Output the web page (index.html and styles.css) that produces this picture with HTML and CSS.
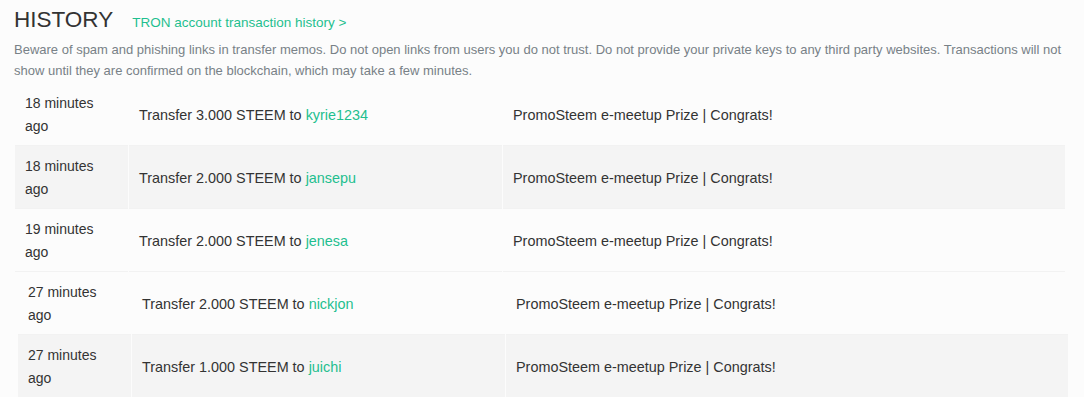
FILE: index.html
```html
<!DOCTYPE html>
<html lang="en">
<head>
    <meta charset="UTF-8">
    <title>History</title>
    <link rel="stylesheet" href="styles.css">
</head>
<body>
<div class="wallet">
    <!--    标题-->
    <div class="head">
        <h2 class="title">HISTORY</h2>
        <a href="#" class="tronLink">TRON account transaction history &gt;</a>
    </div>
    <p class="warning">Beware of spam and phishing links in transfer memos. Do not open links from users you do not trust. Do not provide your private keys to any third party websites. Transactions will not show until they are confirmed on the blockchain, which may take a few minutes.</p>
    <!--    记录-->
    <table class="history">
        <tr>
            <td class="time">18 minutes ago</td>
            <td class="op">Transfer 3.000 STEEM to <a href="#">kyrie1234</a></td>
            <td class="memo">PromoSteem e-meetup Prize | Congrats!</td>
        </tr>
        <tr>
            <td class="time">18 minutes ago</td>
            <td class="op">Transfer 2.000 STEEM to <a href="#">jansepu</a></td>
            <td class="memo">PromoSteem e-meetup Prize | Congrats!</td>
        </tr>
        <tr>
            <td class="time">19 minutes ago</td>
            <td class="op">Transfer 2.000 STEEM to <a href="#">jenesa</a></td>
            <td class="memo">PromoSteem e-meetup Prize | Congrats!</td>
        </tr>
    </table>
    <table class="history more">
        <tr>
            <td class="time">27 minutes ago</td>
            <td class="op">Transfer 2.000 STEEM to <a href="#">nickjon</a></td>
            <td class="memo">PromoSteem e-meetup Prize | Congrats!</td>
        </tr>
        <tr>
            <td class="time">27 minutes ago</td>
            <td class="op">Transfer 1.000 STEEM to <a href="#">juichi</a></td>
            <td class="memo">PromoSteem e-meetup Prize | Congrats!</td>
        </tr>
    </table>
</div>
</body>
</html>
```

FILE: styles.css
```css
body{
    margin: 0;
    background: #fcfcfc;
    font-family: "Liberation Sans", Arial, sans-serif;
    color: #333;
}
a{
    color: #1fbf8f;
    text-decoration: none;
}
.wallet{
    width: 1052px;
    padding: 5px 0 0 14px;
}
/*标题*/
.head{
    display: flex;
    align-items: baseline;
    gap: 19px;
}
.title{
    margin: 0;
    font-size: 22.5px;
    font-weight: normal;
    line-height: 30px;
}
.tronLink{
    font-size: 13.5px;
}
.warning{
    margin: 4px 0 2px;
    font-size: 13px;
    line-height: 21px;
    color: #788187;
}
/*记录表格*/
.history{
    width: 1052px;
    border-collapse: collapse;
    font-size: 14.4px;
}
.history td{
    padding: 9px 9px 7px 10px;
    line-height: 23px;
    border: 1px solid #fcfcfc;
    border-width: 0 1px;
    vertical-align: middle;
}
.history .time{
    width: 94px;
    font-size: 14px;
}
.history .op{
    width: 354px;
}
.history tr{
    border-bottom: 1px solid #f2f2f2;
}
.history tr:nth-child(even){
    background: #f4f4f4;
}
/*后两行往右错开*/
.history.more{
    margin-left: 3px;
}
```
